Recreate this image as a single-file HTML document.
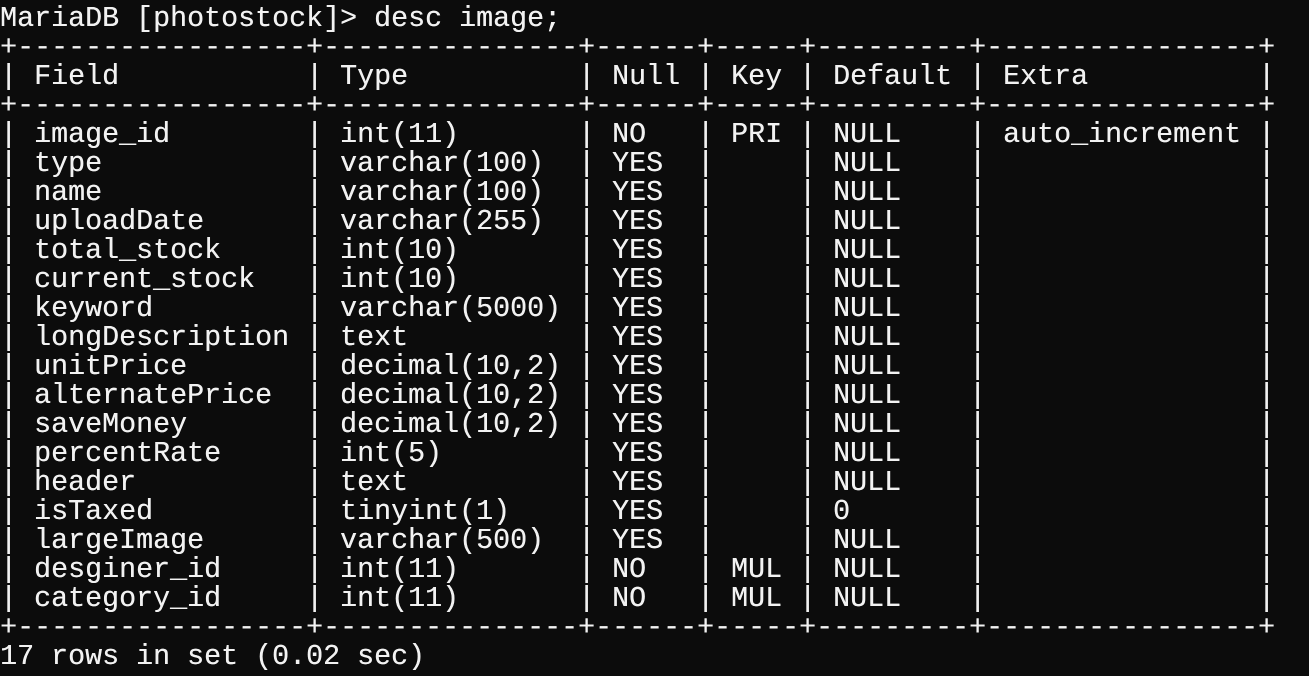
<!DOCTYPE html>
<html><head><meta charset="utf-8"><style>
html,body{margin:0;padding:0;background:#0c0c0c;width:1309px;height:676px;overflow:hidden}
pre{position:absolute;left:0;top:4px;margin:0;font-family:"Liberation Mono",monospace;font-size:28.33px;line-height:29px;color:#f2f2f2;white-space:pre;text-shadow:0.3px 0 0 #f2f2f2}
</style></head><body><pre>MariaDB [photostock]&gt; desc image;
+-----------------+---------------+------+-----+---------+----------------+
| Field           | Type          | Null | Key | Default | Extra          |
+-----------------+---------------+------+-----+---------+----------------+
| image_id        | int(11)       | NO   | PRI | NULL    | auto_increment |
| type            | varchar(100)  | YES  |     | NULL    |                |
| name            | varchar(100)  | YES  |     | NULL    |                |
| uploadDate      | varchar(255)  | YES  |     | NULL    |                |
| total_stock     | int(10)       | YES  |     | NULL    |                |
| current_stock   | int(10)       | YES  |     | NULL    |                |
| keyword         | varchar(5000) | YES  |     | NULL    |                |
| longDescription | text          | YES  |     | NULL    |                |
| unitPrice       | decimal(10,2) | YES  |     | NULL    |                |
| alternatePrice  | decimal(10,2) | YES  |     | NULL    |                |
| saveMoney       | decimal(10,2) | YES  |     | NULL    |                |
| percentRate     | int(5)        | YES  |     | NULL    |                |
| header          | text          | YES  |     | NULL    |                |
| isTaxed         | tinyint(1)    | YES  |     | 0       |                |
| largeImage      | varchar(500)  | YES  |     | NULL    |                |
| desginer_id     | int(11)       | NO   | MUL | NULL    |                |
| category_id     | int(11)       | NO   | MUL | NULL    |                |
+-----------------+---------------+------+-----+---------+----------------+
17 rows in set (0.02 sec)</pre></body></html>
